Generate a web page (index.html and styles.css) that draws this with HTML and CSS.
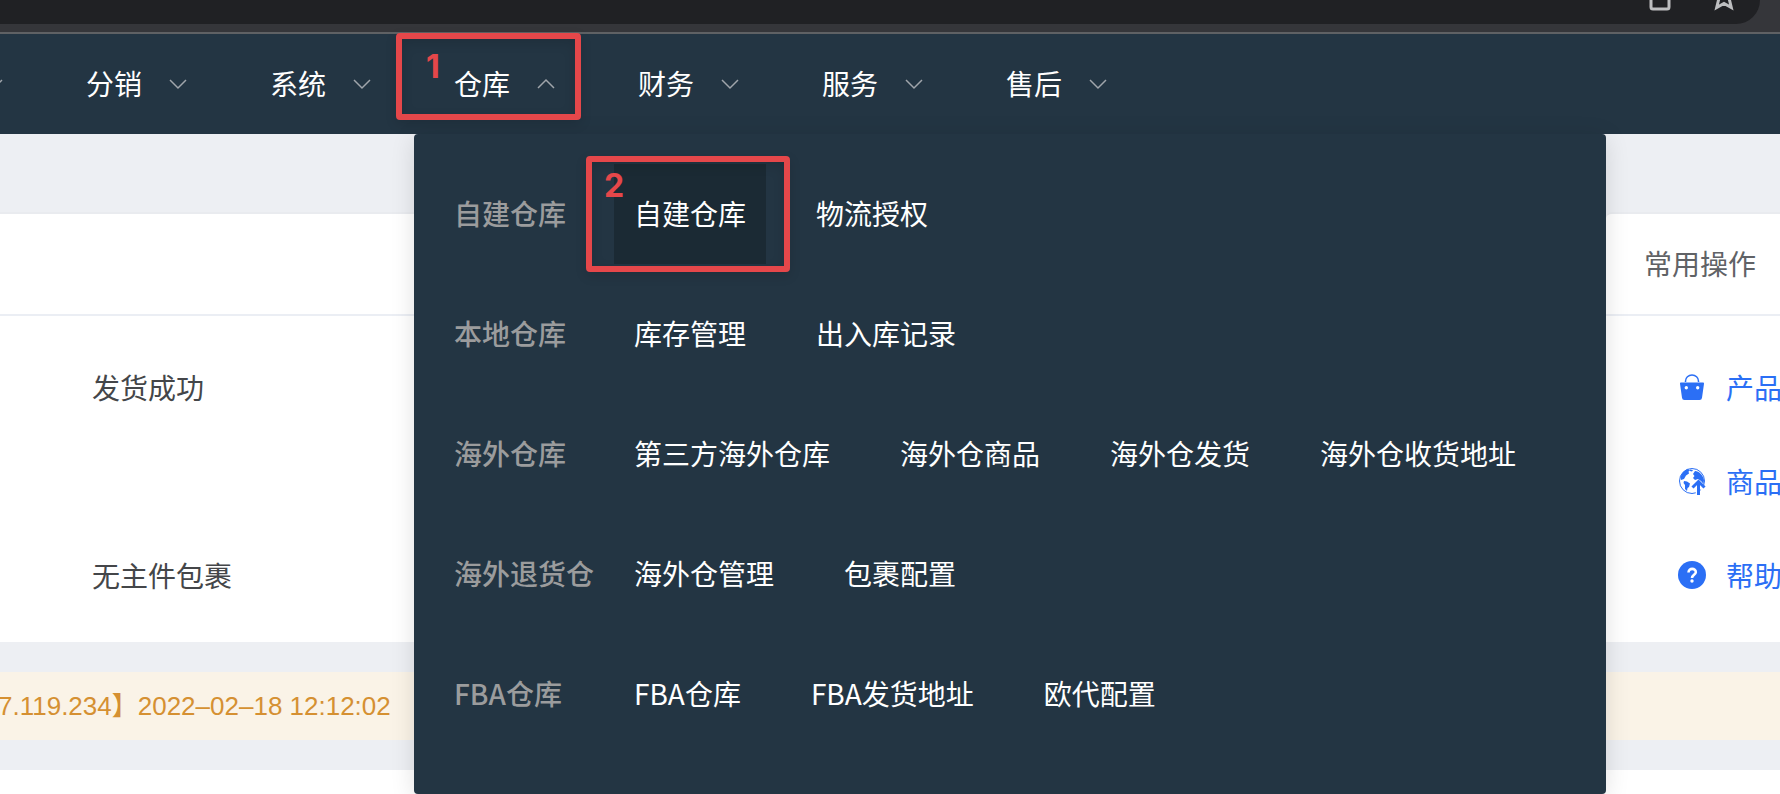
FILE: index.html
```
<!DOCTYPE html>
<html lang="zh-CN">
<head>
    <meta charset="UTF-8">
    <meta name="viewport" content="width=device-width, initial-scale=1.0">
    <title>仓库</title>
    <link rel="stylesheet" href="styles.css">
</head>
<body>
    <div class="browser">
        <div class="address">
            <svg width="24" height="24" viewBox="0 0 24 24" fill="none" stroke="#bdbec0" stroke-width="3"><path d="M6 4H5a2 2 0 0 0-2 2v13a2 2 0 0 0 2 2h14a2 2 0 0 0 2-2V6a2 2 0 0 0-2-2h-1M12 0v12"/></svg>
            <svg width="24" height="24" viewBox="0 0 24 24" fill="none" stroke="#bdbec0" stroke-width="3"><path d="M12 -3l2.500 6 7 .5-5 4.500 2.800 11.500L12 15.500l-7.300 4L7.500 8l-5-4.500 7-.5z"/></svg>
        </div>
    </div>
    <nav class="nav">
        <ul class="nav-list">
            <li class="nav-item"><svg class="arrow" viewBox="0 0 24 24"><path d="M4 8l8 8 8-8"/></svg></li>
            <li class="nav-item"><a href="#">分销</a><svg class="arrow" viewBox="0 0 24 24"><path d="M4 8l8 8 8-8"/></svg></li>
            <li class="nav-item"><a href="#">系统</a><svg class="arrow" viewBox="0 0 24 24"><path d="M4 8l8 8 8-8"/></svg></li>
            <li class="nav-item"><a href="#">仓库</a><svg class="arrow" viewBox="0 0 24 24"><path d="M4 16l8-8 8 8"/></svg><span class="mark mark-nav">1</span></li>
            <li class="nav-item"><a href="#">财务</a><svg class="arrow" viewBox="0 0 24 24"><path d="M4 8l8 8 8-8"/></svg></li>
            <li class="nav-item"><a href="#">服务</a><svg class="arrow" viewBox="0 0 24 24"><path d="M4 8l8 8 8-8"/></svg></li>
            <li class="nav-item"><a href="#">售后</a><svg class="arrow" viewBox="0 0 24 24"><path d="M4 8l8 8 8-8"/></svg></li>
        </ul>
        <div class="menu">
            <div class="menu-row">
                <span class="menu-label">自建仓库</span>
                <div class="menu-links">
                    <a class="active" href="#">自建仓库<span class="mark mark-menu">2</span></a>
                    <a href="#">物流授权</a>
                </div>
            </div>
            <div class="menu-row">
                <span class="menu-label">本地仓库</span>
                <div class="menu-links">
                    <a href="#">库存管理</a>
                    <a href="#">出入库记录</a>
                </div>
            </div>
            <div class="menu-row">
                <span class="menu-label">海外仓库</span>
                <div class="menu-links">
                    <a href="#">第三方海外仓库</a>
                    <a href="#">海外仓商品</a>
                    <a href="#">海外仓发货</a>
                    <a href="#">海外仓收货地址</a>
                </div>
            </div>
            <div class="menu-row">
                <span class="menu-label">海外退货仓</span>
                <div class="menu-links">
                    <a href="#">海外仓管理</a>
                    <a href="#">包裹配置</a>
                </div>
            </div>
            <div class="menu-row">
                <span class="menu-label">FBA仓库</span>
                <div class="menu-links">
                    <a href="#">FBA仓库</a>
                    <a href="#">FBA发货地址</a>
                    <a href="#">欧代配置</a>
                </div>
            </div>
        </div>
    </nav>
    <main class="content">
        <div class="cards">
            <section class="card">
                <div class="card-head"></div>
                <ul class="status">
                    <li>发货成功</li>
                    <li>无主件包裹</li>
                </ul>
            </section>
            <section class="card card-side">
                <h2 class="card-head">常用操作</h2>
                <ul class="actions">
                    <li><a href="#">
                        <svg viewBox="0 0 28 28"><path d="M7.500 9V8a6.500 6 0 0 1 13 0v1" fill="none" stroke="#2b6ff5" stroke-width="1.500"/><path fill="#2b6ff5" fill-rule="evenodd" d="M3 9.500h22a1 1 0 0 1 1 1.200l-2 14a2.500 2.500 0 0 1-2.500 2.300h-15A2.500 2.500 0 0 1 4 24.700l-2-14a1 1 0 0 1 1-1.200zM8.300 13a1.700 1.700 0 1 0 0 3.400 1.700 1.700 0 0 0 0-3.400zm11.400 0a1.700 1.700 0 1 0 0 3.400 1.700 1.700 0 0 0 0-3.400z"/></svg>产品</a></li>
                    <li><a href="#">
                        <svg viewBox="0 0 28 28"><circle cx="14" cy="14" r="12.500" fill="none" stroke="#2b6ff5"/><path fill="#2b6ff5" d="M2.500 10C4 5.500 6.500 3 10 2l2 1.500-1.500 1 .5 2-3 2-2 3.500-3 1zM12 2.500l3 .5-1 1.500-2-.5zM17 4c4 0 8 4 9 9l-.5 4-2.500-3-3-2-3 1-2-2 1.500-2-1.500-2zM6 14l3 .5 3 2-1 3.500-1.500 1L9 24l-2-2v-4l-1.500-2z"/><path d="M20 28V18m-6 4.500l6-6 6 6" fill="none" stroke="#fff" stroke-width="4.500"/><path d="M20.500 28V16M14.500 20.500l6-6 6 6" fill="none" stroke="#2b6ff5" stroke-width="3"/></svg>商品</a></li>
                    <li><a href="#">
                        <svg viewBox="0 0 28 28"><circle cx="14" cy="14" r="14" fill="#2b6ff5"/><path d="M10.500 11.500c0-5 7.500-4.600 7.300-.3-.1 2.500-3.800 2.800-3.800 5.800" fill="none" stroke="#fff" stroke-width="2.600"/><circle cx="14" cy="20" r="1.700" fill="#fff"/></svg>帮助</a></li>
                </ul>
            </section>
        </div>
        <p class="notice">7.119.234】2022–02–18 12:12:02</p>
        <section class="panel"></section>
    </main>
</body>
</html>
```

FILE: styles.css
```
* {
    box-sizing: border-box;
}
body {
    display: flex;
    flex-direction: column;
    min-height: 100vh;
    margin: 0;
    overflow: hidden;
    font-family: "Noto Sans CJK SC", sans-serif;
    font-size: 28px;
    line-height: 40px;
    background-color: #edeff3;
}
ul {
    list-style: none;
    margin: 0;
    padding: 0;
}
a {
    color: inherit;
    text-decoration: none;
}
.browser {
    height: 34px;
    padding-right: 20px;
    background-color: #35363a;
    border-bottom: 2px solid #5f6164;
}
.address {
    display: flex;
    justify-content: flex-end;
    gap: 40px;
    height: 24px;
    padding-right: 24px;
    background-color: #202124;
    border-radius: 0 0 24px 0;
}
.address svg {
    margin-top: -12px;
}
.nav {
    position: relative;
    color: #fff;
    background-color: #233543;
}
.nav-list {
    display: flex;
    margin-left: -138px;
}
.nav-item {
    position: relative;
    display: flex;
    flex: none;
    align-items: center;
    justify-content: flex-end;
    gap: 24px;
    width: 184px;
    height: 100px;
    padding: 0 40px;
}
.nav-item a {
    padding-bottom: 2px;
}
.arrow {
    width: 24px;
    height: 24px;
    fill: none;
    stroke: #a0a5ab;
    stroke-width: 1.5;
}
/* drop-down */
.menu {
    position: absolute;
    top: 100%;
    left: 414px;
    right: 174px;
    z-index: 1;
    padding: 20px 40px 40px;
    background-color: #233543;
    border-radius: 4px;
    box-shadow: 0 4px 24px rgba(0, 0, 0, 0.12);
}
.menu-row {
    display: flex;
    align-items: center;
    height: 120px;
}
.menu-label {
    width: 160px;
    padding-bottom: 2px;
    color: #9b9c9d;
    font-weight: 500;
}
.menu-links {
    display: flex;
    gap: 30px;
}
.menu-links a {
    position: relative;
    padding: 29px 20px 31px;
    white-space: nowrap;
}
.menu-links .active {
    background-color: #1b2a34;
}
/* numbered steps */
.mark {
    position: absolute;
    z-index: 2;
    border: 6px solid #e5474a;
    border-radius: 4px;
    color: #e5474a;
    font-family: Inter, sans-serif;
    font-size: 32px;
    font-weight: bold;
    line-height: 40px;
    box-shadow: 0 4px 12px rgba(0, 0, 0, 0.12), inset 0 4px 12px rgba(0, 0, 0, 0.12);
}
.mark-nav {
    top: -1px;
    bottom: 14px;
    left: -18px;
    right: 17px;
    padding: 8px 24px;
}
.mark-menu {
    top: -8px;
    bottom: -8px;
    left: -28px;
    right: -24px;
    padding: 4px 12px;
}
.content {
    display: flex;
    flex: 1;
    flex-direction: column;
    gap: 30px;
    padding-top: 78px;
}
.cards {
    display: grid;
    grid-template-columns: 1fr 174px;
    gap: 30px;
}
.card {
    overflow: hidden;
    background-color: #fff;
    border-top: 2px solid #e9ebef;
}
.card-side {
    border-radius: 6px 0 0 0;
}
.card-head {
    height: 102px;
    margin: 0;
    padding: 29px 38px;
    border-bottom: 2px solid #ebeef4;
    color: #606266;
    font-size: 28px;
    font-weight: normal;
    white-space: nowrap;
}
.status {
    display: grid;
    gap: 94px;
    padding: 24px 92px 20px;
    color: #444649;
    line-height: 94px;
}
.actions {
    padding: 24px 0 20px 72px;
    color: #2b6ff5;
    line-height: 94px;
}
.actions a {
    display: flex;
    align-items: center;
    gap: 20px;
    white-space: nowrap;
}
.actions svg {
    flex: none;
    width: 28px;
    height: 28px;
}
.notice {
    margin: 0;
    padding: 14px 0;
    color: #d59032;
    font-family: "Liberation Sans", "Noto Sans CJK SC", sans-serif;
    font-size: 26px;
    text-indent: -2px;
    white-space: nowrap;
    background-color: #faf3e7;
}
.panel {
    flex: 1;
    background-color: #fff;
}
```
